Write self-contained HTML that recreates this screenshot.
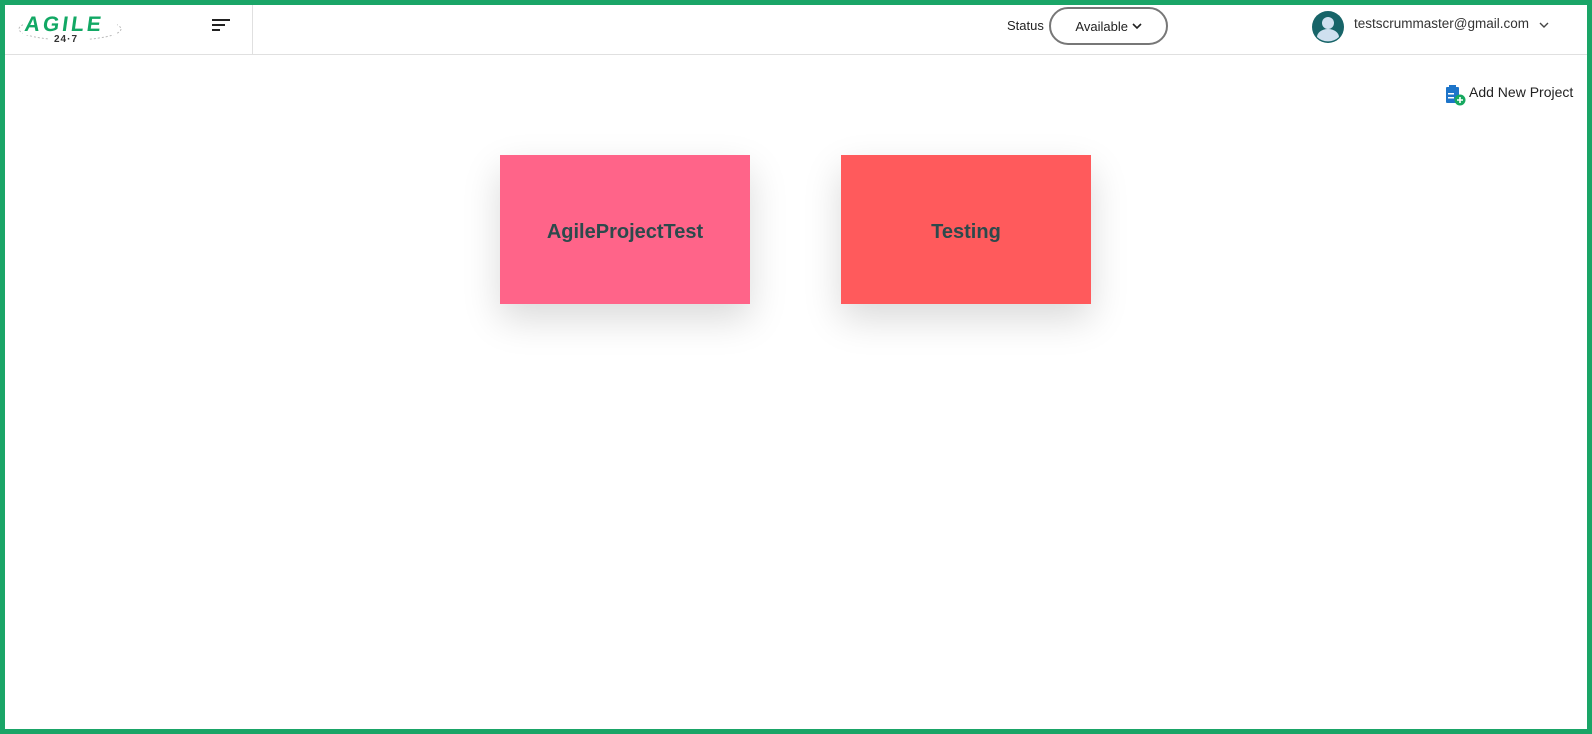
<!DOCTYPE html>
<html><head><style>
*{margin:0;padding:0;box-sizing:border-box}
body{width:1592px;height:734px;border:5px solid #1aa567;background:#fff;font-family:"Liberation Sans",sans-serif;position:relative;overflow:hidden}
.hdr{position:absolute;left:0;top:0;width:1582px;height:50px;border-bottom:1px solid #e0e0e0}
.div{position:absolute;left:247px;top:0;width:1px;height:49px;background:#e0e0e0}
.abs{position:absolute}
.card{position:absolute;top:150px;width:250px;height:149px;display:flex;align-items:center;justify-content:center;padding-top:5px;font-weight:bold;font-size:20px;color:#2c4a4c;box-shadow:0 15px 35px rgba(0,0,0,0.15)}
</style></head><body>
<div class="hdr">
 <svg class="abs" style="left:12px;top:4px" width="106" height="34" viewBox="0 0 106 34">
  <ellipse cx="53" cy="20" rx="51" ry="11" fill="none" stroke="#bbb" stroke-width="1" stroke-dasharray="2 2"/>
  <rect x="6" y="8" width="94" height="18" fill="#fff"/>
  <text x="10" y="22" font-family="Liberation Sans" font-weight="bold" font-size="21" fill="#12a864" letter-spacing="3" transform="skewX(-8)">AGILE</text>
  <rect x="32" y="25" width="40" height="9" fill="#fff"/>
  <text x="37" y="33" font-family="Liberation Sans" font-weight="bold" font-size="10" fill="#333" letter-spacing="1">24·7</text>
 </svg>
 <svg class="abs" style="left:207px;top:13px" width="18" height="14"><rect x="0" y="1" width="18" height="2" fill="#222"/><rect x="0" y="6" width="13" height="2" fill="#222"/><rect x="0" y="11" width="8" height="2" fill="#222"/></svg>
 <div class="div"></div>
 <div class="abs" style="left:1002px;top:13px;font-size:13px;color:#222">Status</div>
 <div class="abs" style="left:1044px;top:2px;width:119px;height:38px;border:2px solid #777;border-radius:19px;font-size:13px;color:#222;display:flex;align-items:center;justify-content:center">Available&nbsp;<svg width="10" height="7"><path d="M1 1L5 5L9 1" stroke="#222" stroke-width="1.6" fill="none"/></svg></div>
 <svg class="abs" style="left:1307px;top:6px" width="32" height="32" viewBox="0 0 32 32"><circle cx="16" cy="16" r="16" fill="#176468"/><circle cx="16" cy="12" r="6" fill="#cfe0ef"/><path d="M5 26a11 8 0 0 1 22 0a16 16 0 0 1 -22 0z" fill="#cfe0ef"/></svg>
 <div class="abs" style="left:1349px;top:11px;font-size:13.5px;color:#333">testscrummaster@gmail.com</div>
 <svg class="abs" style="left:1534px;top:17px" width="10" height="7"><path d="M1 1L5 5L9 1" stroke="#444" stroke-width="1.4" fill="none"/></svg>
</div>
<svg class="abs" style="left:1440px;top:79px" width="22" height="22" viewBox="0 0 22 22"><rect x="1" y="3" width="13" height="16" rx="1" fill="#1d74c9"/><rect x="4" y="1" width="7" height="4" fill="#1d74c9"/><rect x="3" y="9" width="6" height="1.5" fill="#fff"/><rect x="3" y="13" width="6" height="1.5" fill="#fff"/><circle cx="15" cy="16" r="5.5" fill="#16a85f"/><path d="M15 13v6M12 16h6" stroke="#fff" stroke-width="1.6"/></svg>
<div class="abs" style="left:1464px;top:79px;font-size:14px;color:#222">Add New Project</div>
<div class="card" style="left:495px;background:#ff6489">AgileProjectTest</div>
<div class="card" style="left:836px;background:#ff5a5c">Testing</div>
</body></html>
